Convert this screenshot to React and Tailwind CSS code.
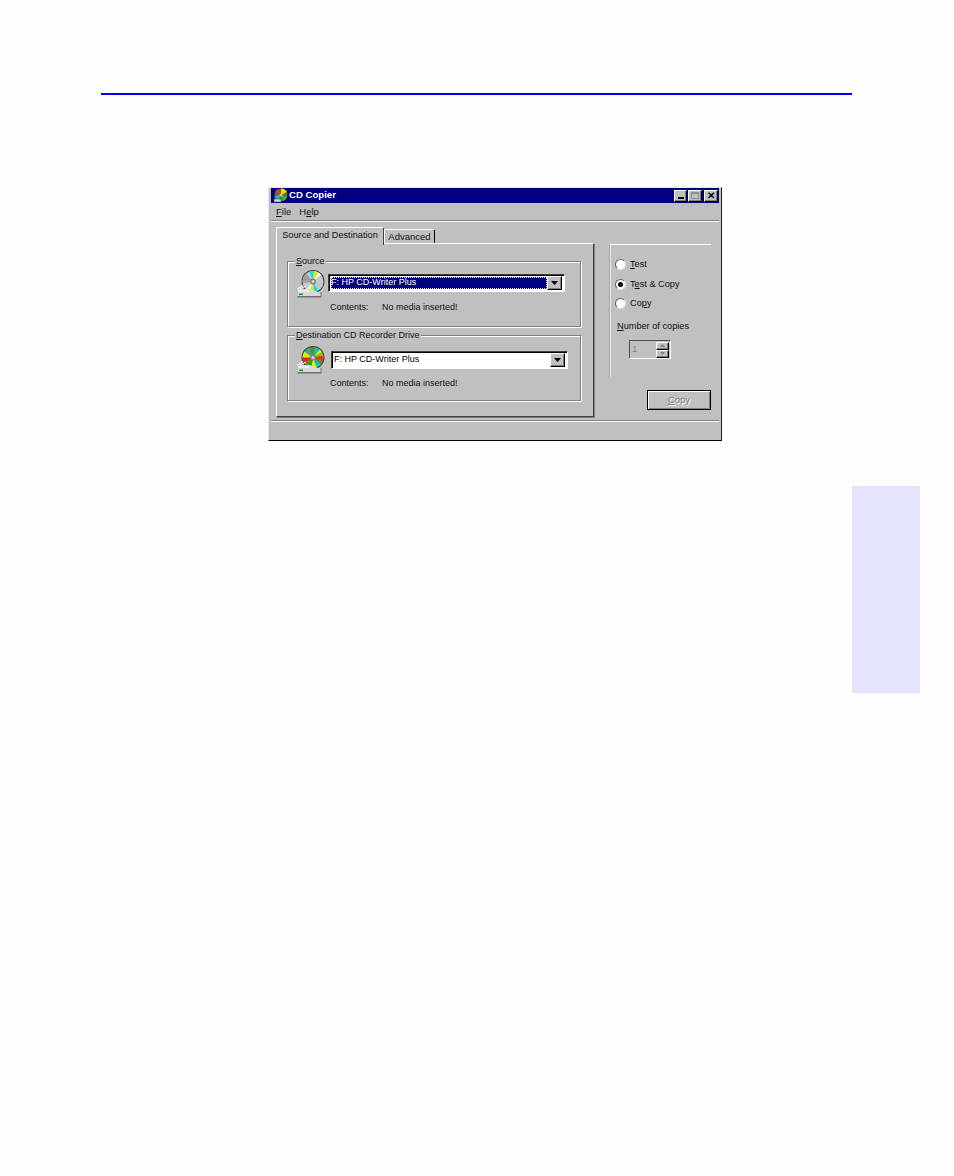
import React from "react";

const raised = "bg-[#c0c0c0] border border-t-white border-l-white border-r-black border-b-black shadow-[inset_-1px_-1px_0_#808080]";

function Wedge({ cx, cy, r, a, b, fill }) {
  const rad = (d) => (d * Math.PI) / 180;
  const p = (d) => `${cx + r * Math.cos(rad(d))} ${cy + r * Math.sin(rad(d))}`;
  return <path d={`M${cx} ${cy}L${p(a)}A${r} ${r} 0 0 1 ${p(b)}Z`} fill={fill} />;
}

function CdIcon({ variant }) {
  const colored = variant === "dest";
  const base = colored ? "#7f7f1e" : "#c8c8c8";
  const wedges = colored
    ? [
        [-80, -50, "#00c8c8"], [-50, -30, "#e8e800"], [-30, 0, "#7fbf20"],
        [40, 70, "#00c8c8"], [70, 100, "#e8e800"], [100, 130, "#20a020"],
        [150, 180, "#e82020"], [180, 215, "#e8e800"], [215, 250, "#20b0b0"], [-10, 15, "#e83030"],
      ]
    : [
        [-110, -85, "#00e8e8"], [-85, -60, "#e8e800"], [-60, -40, "#f4f4f4"],
        [60, 85, "#00e8e8"], [85, 110, "#e8e800"], [110, 130, "#f4f4f4"], [170, 230, "#a0a0a0"],
      ];
  return (
    <svg width="28" height="28" viewBox="0 0 28 28" className="shrink-0">
      <path d="M1 21L5 16H20V24H2Z" fill="#b0b0b0" />
      <circle cx="16" cy="11.5" r="11.5" fill="#404040" />
      <circle cx="16" cy="11.5" r="10.5" fill={base} />
      {wedges.map(([a, b, f], i) => (
        <Wedge key={i} cx={16} cy={11.5} r={10.5} a={a} b={b} fill={f} />
      ))}
      <circle cx="16" cy="11.5" r="3" fill="#808080" />
      <circle cx="16" cy="11.5" r="1.5" fill="#d8d8d8" />
      <path d="M1 19H13L24 23V26H1Z" fill="#d8d8d8" />
      <path d="M0.5 19L6 15.5M3 19L9 16M1 21H12" stroke="#ffffff" strokeWidth="1" />
      <path d="M0.5 26H24V27.5H0.5Z" fill="#707070" />
      <path d="M24 22V27" stroke="#707070" strokeWidth="1" />
      <rect x="2" y="23.5" width="4" height="1.6" fill="#00b000" />
    </svg>
  );
}

function TitleIcon() {
  return (
    <svg width="15" height="15" viewBox="0 0 15 15" className="shrink-0">
      <circle cx="8" cy="7" r="6.5" fill="#6b6b20" />
      <path d="M8 7L8 .5A6.5 6.5 0 0 1 14 4Z" fill="#e0e000" />
      <path d="M8 7L14 9A6.5 6.5 0 0 1 10 13Z" fill="#30c030" />
      <path d="M8 7L5 13A6.5 6.5 0 0 1 1.6 8Z" fill="#00c8c8" />
      <path d="M8 7L2 4A6.5 6.5 0 0 1 5 1Z" fill="#e04030" />
      <circle cx="8" cy="7" r="1.6" fill="#c0c0c0" />
      <path d="M1 11H8V14H1Z" fill="#d8d8d8" stroke="#505050" strokeWidth="0.6" />
    </svg>
  );
}

function Arrow({ small }) {
  return small ? (
    <svg width="5" height="3" viewBox="0 0 5 3"><path d="M0 0H5L2.5 3Z" fill="#808080" /></svg>
  ) : (
    <svg width="7" height="4" viewBox="0 0 7 4"><path d="M0 0H7L3.5 4Z" fill="#000" /></svg>
  );
}

function Combo({ selected, className }) {
  return (
    <div className={`flex items-center h-[18px] w-[237px] bg-white border border-t-[#404040] border-l-[#404040] border-r-white border-b-white shadow-[inset_1px_1px_0_#000] p-[2px] ${className}`}>
      <div
        className={`flex-1 h-full flex items-center text-[9px] ${
          selected ? "bg-[#000080] text-white outline-1 outline-dotted outline-[#e0e0e0] -outline-offset-1" : "text-black"
        }`}
      >
        F: HP CD-Writer Plus
      </div>
      <div className={`${raised} w-[15px] h-[14px] flex items-center justify-center`}>
        <Arrow />
      </div>
    </div>
  );
}

function Group({ legend, first, variant, selected, rowClass, comboClass }) {
  return (
    <div className="h-[66px] w-[294px] border border-[#808080] shadow-[inset_1px_1px_0_#fff,1px_1px_0_#fff]">
      <div className="-mt-[8px] ml-[7px] w-fit h-[14px] px-px bg-[#c0c0c0] text-[9px] leading-[14px]">
        <u>{first}</u>
        {legend}
      </div>
      <div className={`flex items-start ml-[9px] ${rowClass}`}>
        <CdIcon variant={variant} />
        <Combo selected={selected} className={comboClass} />
      </div>
      <div className="flex ml-[42px] text-[9px] leading-[14px] mt-[2px]">
        <span className="w-[52px]">Contents:</span>
        <span>No media inserted!</span>
      </div>
    </div>
  );
}

function Radio({ label, checked, className }) {
  return (
    <div className={`flex items-center h-[14px] ${className}`}>
      <span className="w-[11px] h-[11px] rounded-full bg-white border border-t-[#606060] border-l-[#606060] border-r-[#dfdfdf] border-b-[#dfdfdf] flex items-center justify-center shrink-0">
        {checked && <span className="w-[5px] h-[5px] rounded-full bg-black" />}
      </span>
      <span className="ml-[4px] text-[9.2px] leading-[14px]">{label}</span>
    </div>
  );
}

function WinBtn({ children, className }) {
  return <div className={`${raised} h-[12px] flex items-center justify-center ${className}`}>{children}</div>;
}

export default function App() {
  return (
    <div className="w-[954px] h-[1176px] bg-[#fefefe] overflow-hidden pt-[93px] font-['Liberation_Sans',Arial,sans-serif] text-[#111]">
      <div className="ml-[101px] w-[751px] h-[2px] bg-[#0000f0]" />

      <div className="ml-[268px] mt-[92px] w-[454px] h-[254px] bg-[#c0c0c0] border border-t-[#e8e8e8] border-l-[#e8e8e8] border-r-[#202020] border-b-black px-[2px] flex flex-col">
        <div className="h-[15px] bg-[#000080] flex items-center pl-[2px] pr-[1px] text-white shrink-0">
          <TitleIcon />
          <span className="ml-px text-[9.6px] font-bold">CD Copier</span>
          <div className="ml-auto flex items-center">
            <WinBtn className="w-[13px] items-end pb-[2px]"><span className="w-[6px] h-[2px] bg-black block" /></WinBtn>
            <WinBtn className="w-[14px] ml-px"><span className="w-[8px] h-[7px] border border-[#909090] border-t-2 block" /></WinBtn>
            <WinBtn className="w-[14px] ml-[2px] text-black text-[10px] font-bold leading-none">✕</WinBtn>
          </div>
        </div>

        <div className="h-[17px] flex items-center pl-[5px] pt-px text-[9.5px] shrink-0">
          <span><u>F</u>ile</span>
          <span className="ml-[8px]">H<u>e</u>lp</span>
        </div>
        <div className="h-[2px] border-t border-t-[#808080] border-b border-b-white shrink-0" />

        <div className="flex flex-1">
          <div className="ml-[5px] mt-[5px] w-[318px]">
            <div className="flex items-end h-[16px]">
              <div className="relative z-10 h-[18px] -mb-[2px] w-[108px] bg-[#c0c0c0] border border-t-white border-l-white border-b-0 border-r-[#404040] rounded-t-[2px] text-[9.2px] leading-[14px] text-center whitespace-nowrap">
                Source and Destination
              </div>
              <div className="h-[14px] w-[51px] border border-t-white border-l-white border-b-0 border-r-black rounded-t-[2px] text-[9.5px] leading-[14px] text-center whitespace-nowrap">
                Advanced
              </div>
            </div>
            <div className="h-[174px] border border-t-white border-l-white border-r-[#404040] border-b-[#404040] pl-[10px] pt-[17px] flex flex-col gap-[8px] shadow-[1px_1px_0_#808080]">
              <Group first="S" legend="ource" variant="src" selected rowClass="mt-[2px]" comboClass="mt-[4px] ml-[3px]" />
              <Group first="D" legend="estination CD Recorder Drive" variant="dest" rowClass="mt-[4px]" comboClass="mt-[5px] ml-[6px]" />
            </div>
          </div>

          <div className="ml-[15px] flex-1">
            <div className="mt-[22px] w-[102px] h-[133px] border-t border-l border-t-white border-l-[#a8a8a8] shadow-[inset_1px_0_0_#e8e8e8] pt-[12px]">
              <Radio label={<><u>T</u>est</>} className="ml-[5px]" />
              <Radio checked label={<>T<u>e</u>st &amp; Copy</>} className="ml-[5px] mt-[6px]" />
              <Radio label={<>Co<u>p</u>y</>} className="ml-[5px] mt-[5px]" />
              <div className="ml-[7px] mt-[9px] text-[9.2px] leading-[14px]"><u>N</u>umber of copies</div>
              <div className="ml-[19px] mt-[7px] w-[42px] h-[19px] flex items-center border border-t-[#505050] border-l-[#505050] border-r-white border-b-white pl-[2px]">
                <span className="text-[9.5px] text-[#808080] flex-1">1</span>
                <div className="flex flex-col w-[13px] mr-px">
                  <div className={`${raised} h-[8px] flex items-center justify-center`}><span className="rotate-180 flex"><Arrow small /></span></div>
                  <div className={`${raised} h-[8px] flex items-center justify-center`}><Arrow small /></div>
                </div>
              </div>
            </div>
            <div className="ml-[38px] mt-[13px] w-[64px] h-[20px] border border-black bg-[#c0c0c0] shadow-[inset_1px_1px_0_#fff,inset_-1px_-1px_0_#808080] flex items-center justify-center text-[9.5px] text-[#808080] [text-shadow:1px_1px_0_#fff]">
              <u>C</u>opy
            </div>
          </div>
        </div>

        <div className="h-[19px] border-t border-t-white shadow-[0_-1px_0_#808080] shrink-0" />
      </div>

      <div className="ml-[852px] mt-[45px] w-[68px] h-[207px] bg-[#e3e3fd]" />
    </div>
  );
}
